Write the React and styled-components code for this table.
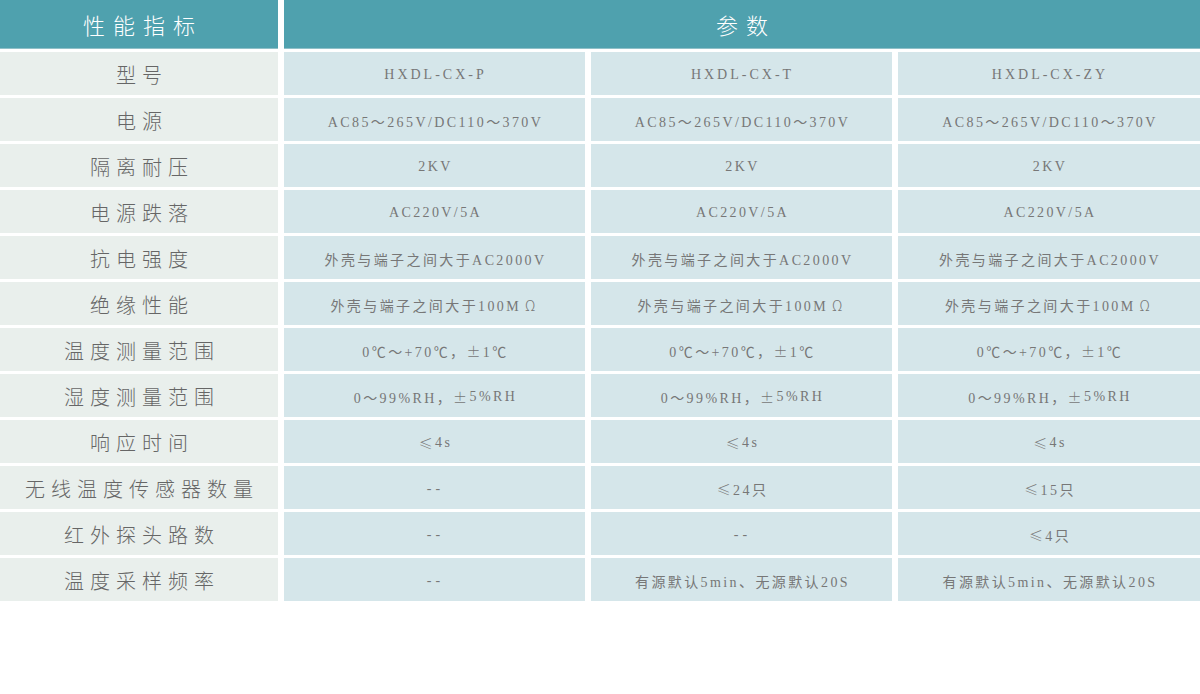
import React from "react";
import styled, { createGlobalStyle } from "styled-components";

const Global = createGlobalStyle`
  html, body { margin: 0; padding: 0; background: #ffffff; }
  body { font-family: "Liberation Serif", "Noto Sans CJK SC", serif; }
`;

const Table = styled.div`
  display: grid;
  grid-template-columns: 278px 301px 301px 1fr;
  column-gap: 6px;
  row-gap: 3px;
  width: 1200px;
`;

const HeadCell = styled.div`
  grid-column: ${(p) => p.$span || "auto"};
  height: 49px;
  border-bottom: 1px solid #8fc0c8;
  background: #4fa1ae;
  color: #ffffff;
  display: flex;
  align-items: center;
  justify-content: center;
  font-family: "Noto Sans CJK SC", sans-serif;
  font-weight: 300;
  font-size: 22px;
  letter-spacing: 8px;
  padding-left: 8px;
  box-sizing: border-box;
`;

const LabelCell = styled.div`
  height: 43px;
  background: #e9efec;
  color: #666;
  display: flex;
  align-items: center;
  justify-content: center;
  font-family: "Noto Sans CJK SC", sans-serif;
  font-weight: 300;
  font-size: 20px;
  letter-spacing: 6px;
  padding-left: 6px;
  padding-top: 1px;
  box-sizing: border-box;
`;

const DataCell = styled.div`
  height: 43px;
  background: #d5e6ea;
  color: #777;
  display: flex;
  align-items: center;
  justify-content: center;
  font-family: "Liberation Serif", "Noto Sans CJK SC", serif;
  font-size: 14px;
  letter-spacing: ${(p) => p.$ls || "2.4px"};
  padding-left: 2px;
  padding-top: 2px;
  box-sizing: border-box;
  white-space: nowrap;
`;

const Wide = styled.span`
  font-family: "Noto Sans CJK SC", sans-serif;
  font-weight: 300;
  display: inline-block;
  width: ${(p) => p.$w || "14px"};
  text-align: center;
  letter-spacing: 0;
  margin-right: 2.4px;
  margin-left: ${(p) => p.$ml || "0px"};
`;

const Dash = styled.span`
  letter-spacing: 4px;
`;

function renderText(t) {
  if (t === "--") return <Dash>--</Dash>;
  const parts = t.split(/([≤±Ω])/);
  return parts.map((p, i) =>
    p === "≤" || p === "±" ? (
      <Wide key={i}>{p}</Wide>
    ) : p === "Ω" ? (
      <Wide key={i} $w="16px" $ml="1px">{p}</Wide>
    ) : (
      <React.Fragment key={i}>{p}</React.Fragment>
    )
  );
}

const rows = [
  ["型号", "HXDL-CX-P", "HXDL-CX-T", "HXDL-CX-ZY", "3px"],
  ["电源", "AC85～265V/DC110～370V", "AC85～265V/DC110～370V", "AC85～265V/DC110～370V"],
  ["隔离耐压", "2KV", "2KV", "2KV"],
  ["电源跌落", "AC220V/5A", "AC220V/5A", "AC220V/5A"],
  ["抗电强度", "外壳与端子之间大于AC2000V", "外壳与端子之间大于AC2000V", "外壳与端子之间大于AC2000V"],
  ["绝缘性能", "外壳与端子之间大于100MΩ", "外壳与端子之间大于100MΩ", "外壳与端子之间大于100MΩ"],
  ["温度测量范围", "0℃～+70℃，±1℃", "0℃～+70℃，±1℃", "0℃～+70℃，±1℃"],
  ["湿度测量范围", "0～99%RH，±5%RH", "0～99%RH，±5%RH", "0～99%RH，±5%RH"],
  ["响应时间", "≤4s", "≤4s", "≤4s"],
  ["无线温度传感器数量", "--", "≤24只", "≤15只"],
  ["红外探头路数", "--", "--", "≤4只"],
  ["温度采样频率", "--", "有源默认5min、无源默认20S", "有源默认5min、无源默认20S"],
];

export default function App() {
  return (
    <>
      <Global />
      <Table>
        <HeadCell>性能指标</HeadCell>
        <HeadCell $span="span 3">参数</HeadCell>
        {rows.map(([label, a, b, c, ls]) => (
          <React.Fragment key={label}>
            <LabelCell>{label}</LabelCell>
            <DataCell $ls={ls}>{renderText(a)}</DataCell>
            <DataCell $ls={ls}>{renderText(b)}</DataCell>
            <DataCell $ls={ls}>{renderText(c)}</DataCell>
          </React.Fragment>
        ))}
      </Table>
    </>
  );
}
